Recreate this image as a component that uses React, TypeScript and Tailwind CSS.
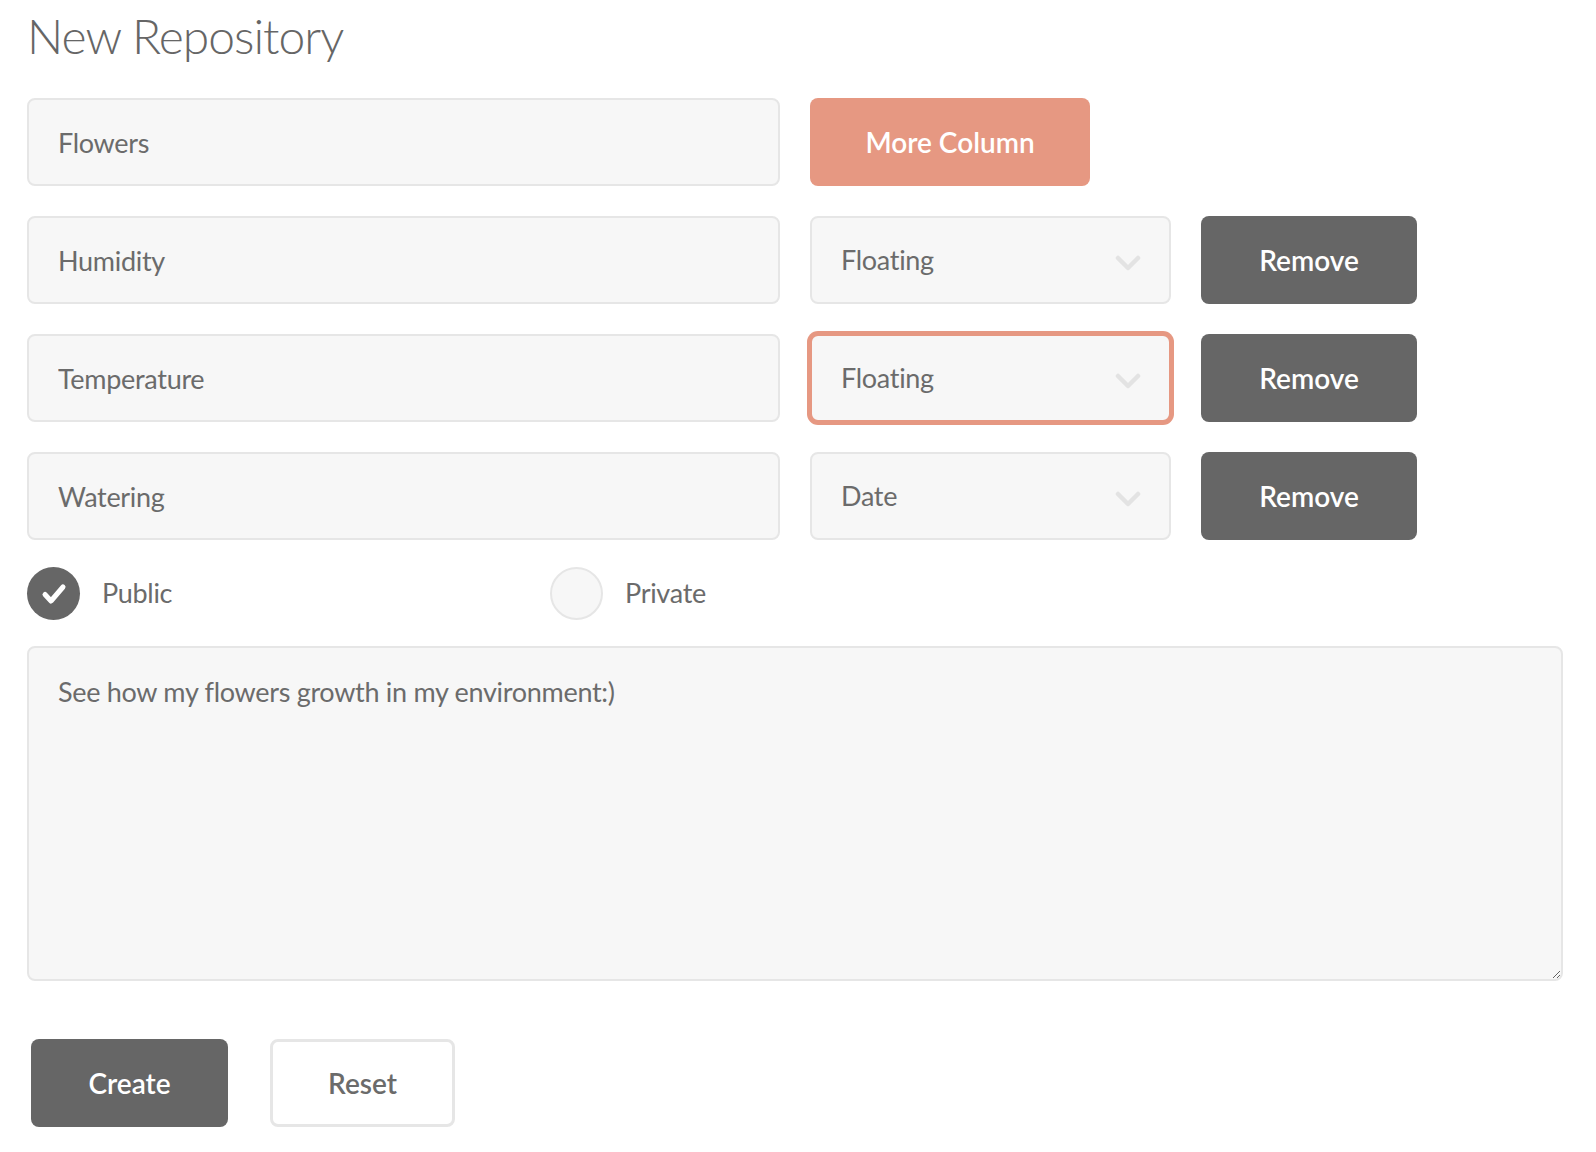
import { useState } from 'react'

const COLUMNS = [
  { name: 'Humidity', type: 'Floating', focused: false },
  { name: 'Temperature', type: 'Floating', focused: true },
  { name: 'Watering', type: 'Date', focused: false },
]

const TYPES = ['Floating', 'Integer', 'Date', 'Text']

function Chevron() {
  return (
    <svg className="pointer-events-none absolute right-[30px] top-[53%] -translate-y-1/2" width="26" height="18" viewBox="0 0 26 18" fill="none">
      <path d="M3 4l10 10 10-10" stroke="#e3e3e3" strokeWidth="4.5" strokeLinecap="round" strokeLinejoin="round" />
    </svg>
  )
}

export default function App() {
  const [visibility, setVisibility] = useState<'public' | 'private'>('public')

  return (
    <main className="min-h-screen bg-white px-[27px] pt-[6px] text-[#666] font-['Lato',sans-serif]">
      <h1 className="text-[48px] leading-[60px] font-light tracking-[-1px] text-[#666]">New Repository</h1>

      {/* Nombre + columnas */}
      <div className="mt-[32px] flex flex-col gap-[30px]">
        <div className="flex gap-[30px]">
          <input
            defaultValue="Flowers"
            className="h-[88px] w-[753px] rounded-[8px] border-2 border-[#e6e6e6] bg-[#f7f7f7] px-[29px] text-[27px] tracking-[-0.3px] text-[#6b6b6b] focus:outline-none"
          />
          <button className="h-[88px] w-[280px] rounded-[8px] bg-[#e69882] text-[28px] font-semibold text-white">
            More Column
          </button>
        </div>

        {COLUMNS.map(col => (
          <div key={col.name} className="flex gap-[30px]">
            <input
              defaultValue={col.name}
              className="h-[88px] w-[753px] rounded-[8px] border-2 border-[#e6e6e6] bg-[#f7f7f7] px-[29px] text-[27px] tracking-[-0.3px] text-[#6b6b6b] focus:outline-none"
            />
            <div className="relative w-[361px]">
              <select
                defaultValue={col.type}
                className={`h-[88px] w-full appearance-none rounded-[8px] border-2 bg-[#f7f7f7] px-[29px] text-[27px] tracking-[-0.3px] text-[#6b6b6b] focus:outline-none ${
                  col.focused ? 'border-[#e69882] ring-[3px] ring-[#e69882]' : 'border-[#e6e6e6]'
                }`}
              >
                {TYPES.map(t => (
                  <option key={t} value={t}>{t}</option>
                ))}
              </select>
              <Chevron />
            </div>
            <button className="h-[88px] w-[216px] rounded-[8px] bg-[#666] text-[28px] font-semibold text-white">
              Remove
            </button>
          </div>
        ))}
      </div>

      {/* Visibilidad */}
      <div className="mt-[27px] flex items-center">
        <button onClick={() => setVisibility('public')} className="flex w-[523px] items-center gap-[22px]">
          <span
            className={`flex h-[53px] w-[53px] items-center justify-center rounded-full ${
              visibility === 'public' ? 'bg-[#666]' : 'border-2 border-[#e6e6e6] bg-[#f7f7f7]'
            }`}
          >
            {visibility === 'public' && (
              <svg width="26" height="22" viewBox="0 0 26 22" fill="none">
                <path d="M4 11.5l6 6.5L22 4" stroke="white" strokeWidth="5" strokeLinecap="round" strokeLinejoin="round" />
              </svg>
            )}
          </span>
          <span className="text-[27px] tracking-[-0.3px] text-[#6b6b6b]">Public</span>
        </button>
        <button onClick={() => setVisibility('private')} className="flex items-center gap-[22px]">
          <span
            className={`flex h-[53px] w-[53px] items-center justify-center rounded-full ${
              visibility === 'private' ? 'bg-[#666]' : 'border-2 border-[#e6e6e6] bg-[#f7f7f7]'
            }`}
          >
            {visibility === 'private' && (
              <svg width="26" height="22" viewBox="0 0 26 22" fill="none">
                <path d="M4 11.5l6 6.5L22 4" stroke="white" strokeWidth="5" strokeLinecap="round" strokeLinejoin="round" />
              </svg>
            )}
          </span>
          <span className="text-[27px] tracking-[-0.3px] text-[#6b6b6b]">Private</span>
        </button>
      </div>

      {/* Descripción */}
      <textarea
        defaultValue="See how my flowers growth in my environment:)"
        className="mt-[26px] block h-[335px] w-[1536px] rounded-[8px] border-2 border-[#e6e6e6] bg-[#f7f7f7] px-[29px] pt-[24px] text-[27px] tracking-[-0.3px] text-[#6b6b6b] focus:outline-none"
      />

      {/* Acciones */}
      <div className="mt-[58px] flex gap-[42px] pl-[4px]">
        <button className="h-[88px] w-[197px] rounded-[8px] bg-[#666] text-[28px] font-semibold text-white">
          Create
        </button>
        <button className="h-[88px] w-[185px] rounded-[8px] border-[3px] border-[#e6e6e6] bg-white text-[28px] font-semibold text-[#6b6b6b]">
          Reset
        </button>
      </div>
    </main>
  )
}
